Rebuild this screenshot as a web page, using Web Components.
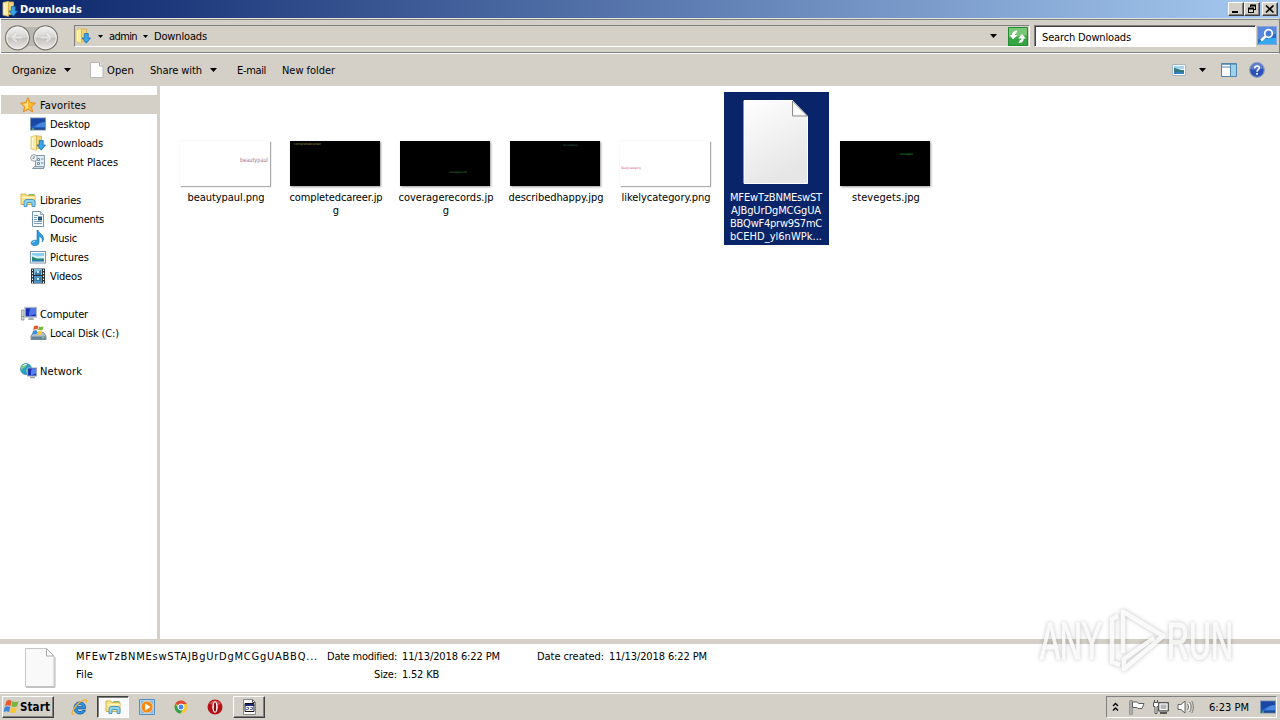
<!DOCTYPE html>
<html lang="en">
<head>
<meta charset="utf-8">
<title>Downloads</title>
<style>
    html, body { margin: 0; height: 100%; overflow: hidden; background: #fff; }
    body {
        --face: #d4cfc7;
        --navy: #0a246a;
        font: 11px/13px "DejaVu Sans Condensed", "DejaVu Sans", sans-serif;
        color: #000;
    }
</style>
</head>
<body>
<explorer-desktop></explorer-desktop>

<script>
// shared base: every element has styles() and template()
class BaseElement extends HTMLElement {
    constructor() {
        super();
        this.attachShadow({ mode: 'open' });
    }

    styles() { return ''; }
    template() { return '<slot></slot>'; }

    connectedCallback() {
        const template = document.createElement('template');
        template.innerHTML = `<style>:host { box-sizing: border-box; } * { box-sizing: border-box; } ${this.styles()}</style>${this.template()}`;
        this.shadowRoot.replaceChildren(template.content.cloneNode(true));
    }
}

// ---------- icons ----------
const ICONS = {
    downloads: [16, 16, `
        <path d="M1 1.500 6.500.5v14.800L1 14z" fill="#f9eca0" stroke="#dcc266" stroke-width=".8"/>
        <path d="M6.500 1h5v12.500h-5z" fill="#f0d67a" stroke="#d3b04e" stroke-width=".8"/>
        <path d="M2.500 3v10" stroke="#fff9d2"/>
        <path d="M9.300 5.500h3.900v4.500h2.300l-4.200 5.200-4.300-5.200h2.300z" fill="#3aa6e8" stroke="#156bb0" stroke-width=".8"/>`],
    star: [16, 16, `
        <path d="M8 .8 10.200 5.600l5.200.600-3.900 3.500 1.100 5.200L8 12.300l-4.600 2.600 1.100-5.200L.6 6.200l5.200-.6z" fill="#ffbc34" stroke="#e58417" stroke-width=".9"/>
        <path d="M8 3v8L5 12.600l.700-3.300L3 7l3.700-.4z" fill="#ffe38a"/>`],
    desktop: [16, 16, `
        <rect x=".5" y="2" width="15" height="12" fill="#2460c0" stroke="#8096b4"/>
        <path d="M1 2.500h14v4C10 6 5 9 1 11z" fill="#1a47a3"/>
        <path d="M6 10c3-3 6-4 9-4v5H5z" fill="#4787dc"/>
        <path d="M1 13h14" stroke="#1b376c"/><path d="M2 13h2" stroke="#66d97b"/>`],
    recent: [16, 16, `
        <path d="M5.500 1.500h9v11l-1 2h-9l1-2z" fill="#e5edf3" stroke="#8597a7"/>
        <path d="M2.500 14.500h11v-2h-9z" fill="#cbd8e2" stroke="#7990a2" stroke-width=".8"/>
        <path d="M7.500 4.500h2v2h-2zM11 5h2.500M11 9h2.500M7.500 8.500h2v2h-2z" fill="none" stroke="#5a87ab" stroke-width=".9"/>
        <circle cx="4" cy="4" r="3.300" fill="#f4f7fa" stroke="#91a0ad"/>
        <path d="M4 2v2.300H2.500" fill="none" stroke="#536575" stroke-width=".8"/>`],
    libraries: [17, 16, `
        <path d="M1 12.500V2h5l1 1.500h8V12.500z" fill="#f6e48f" stroke="#d3ae3e" stroke-width=".9"/>
        <path d="M2 5.500h13" stroke="#fff6c4"/><path d="M8.500 2.600h6" stroke="#6fb96c"/>
        <path d="M4 14.500V10.300C4 8.500 5 7.500 7 7.500h5c2 0 3 1 3 2.800v4.200h-3v-3c0-.8-.3-1-1-1H8c-.7 0-1 .2-1 1v3z" fill="#8ed4f0" stroke="#3a91c6" stroke-width=".9"/>`],
    documents: [16, 16, `
        <path d="M2.500.5h8l3 3v12h-11z" fill="#f8fbfe" stroke="#7393b4"/>
        <path d="M10.500.5v3h3" fill="#dce9f4" stroke="#7393b4" stroke-width=".8"/>
        <path d="M4 4.500h4M4 6.500h3M4 8.500h3M4 10.500h8M4 12.500h8" stroke="#7fa2c3"/>
        <path d="M8 5.500h4v4H8z" fill="#285689"/>`],
    music: [16, 16, `
        <path d="M8 0c.5 3.500 5.500 4 5.500 8.500 0 1.500-.6 2.600-1.300 3.500.600-3-.7-5-3.200-6v6.500c0 1.900-1.800 3.100-4 3.100-2.300 0-3.900-1-3.900-2.600 0-1.700 1.800-2.800 3.900-2.800.7 0 1.300 0 2 .3V0z" fill="#2f9fe0" stroke="#1470b6" stroke-width=".6"/>
        <path d="M2.500 13c0-1 1.200-1.500 2.500-1.500" fill="none" stroke="#a5e0fb"/>`],
    pictures: [16, 16, `
        <rect x=".5" y="2.500" width="15" height="11.500" fill="#fff" stroke="#8192a4"/>
        <path d="M2 4h12v8.500H2z" fill="#8dcff2"/><path d="M2 6.500c3-1 4 1 6 1s4-1 6 0v2H2z" fill="#dff3f8"/>
        <path d="M2 7.500l5 2h7V12H2z" fill="#2b8b72"/><path d="M2 11h12v1.500H2z" fill="#2578b2"/>`],
    videos: [16, 16, `
        <path d="M1 .5h14v15H1z" fill="#2c3136"/>
        <path d="M4 1h8v6H4z" fill="#7ebce4"/><path d="M4 8h8v7H4z" fill="#4e91c9"/>
        <path d="M5 5c2-3 4-1 6-3v5H5zM5 13c2-4 4-1 6-4v4z" fill="#397a9e"/><path d="M7 3h2v2H7zM7 10h2v2H7z" fill="#d6e9ef"/>
        <path d="M2.500 1.500v14M13.500 1.500v14" stroke="#fff" stroke-dasharray="1.500 1.500"/>`],
    computer: [17, 16, `
        <path d="M1.500 4h2.500v10H1.500z" fill="#d2d7db" stroke="#858e96" stroke-width=".8"/><path d="M1.500 10.500h2" stroke="#59b74e"/>
        <rect x="5" y="1.500" width="11.500" height="9.500" fill="#1830b5" stroke="#b4bac5" stroke-width="1.400"/>
        <path d="M11 2h5v6L9 10c0-3 0-5 2-8z" fill="#4f76e6"/>
        <path d="M9 11.500h4l1 2.500H8z" fill="#a5adb4"/>`],
    disk: [17, 16, `
        <path d="M1 11 3.500 7.500h10L16 11v3.500H1z" fill="#b3c0ca" stroke="#5e7485" stroke-width=".8"/>
        <path d="M1.500 11.500h14v2.500h-14z" fill="#658596"/><path d="M12 12.700h2" stroke="#7cf078"/>
        <path d="M4 1.300C6 0 7 .6 8.300 1.200L7.500 4.800c-1.500-.6-2.700-.7-4.300.2z" fill="#e8582a"/>
        <path d="M9 1.400c1.500.7 3 .6 4.500-.1l-.9 3.800c-1.500.6-2.800.5-4.400 0z" fill="#77b83c"/>
        <path d="M3 5.800c1.500-.8 2.700-.7 4.300 0L6.500 9.300C5 8.800 3.700 9 2.200 9.700z" fill="#3a8edb"/>
        <path d="M8 6c1.500.5 2.900.5 4.400-.1l-.9 3.700c-1.500.6-2.800.5-4.300 0z" fill="#f8c838"/>`],
    network: [17, 16, `
        <circle cx="6" cy="6" r="5.500" fill="#2b9ec7" stroke="#237c97" stroke-width=".7"/>
        <path d="M2 2.500C4 1 6 1.500 7 2L5 4.500 3 5 2 7.500.9 5zM6 6.500l3-1 1 3-3 2z" fill="#84d483"/>
        <path d="M3 3c1-1.500 3-2 4-1.500" stroke="#e1fbff" fill="none"/>
        <rect x="7.500" y="5" width="9" height="8" fill="#192fb4" stroke="#99a7b8"/>
        <path d="M12 5.500h4v5l-5 2c-.3-3 0-5 1-7z" fill="#537ff0"/><path d="M10 14.500h5" stroke="#97a1aa" stroke-width="1.500"/>`],
    page: [14, 16, `
        <path d="M.5.5h9l3.500 3.500v11.500H.5z" fill="#fdfdfd" stroke="#b8b8b8"/><path d="M9.500.5V4H13" fill="#eee" stroke="#aaa"/>`],
    refresh: [20, 19, `
        <path d="M0 0h20v19H0z" fill="#37a443"/><path d="M0 0h20v9C14 7 6 12 0 10z" fill="#78c776"/><path d="M.5.5h19v18H.5z" fill="none" stroke="#268c32"/>
        <path d="M5 12.500 2 8h2c0-3 2-4.500 5.500-4.500L8 6.500C7.200 6.700 7 7 7 8h2.500z" fill="#fff"/>
        <path d="m14 7 4 4.500h-2.200c0 3-1.800 4.500-5.300 4.500l1.500-3c1 0 1.300-.5 1.300-1.500H10z" fill="#fff"/>`],
    search: [20, 19, `
        <path d="M0 0h20v19H0z" fill="#256bc7"/><path d="M0 0h20v8C12 8 8 13 0 13z" fill="#5887dc"/><path d="M1 18c5-6 12-6 18-6v6z" fill="#36a8ee"/>
        <path d="M.5.5h19v18H.5z" fill="none" stroke="#88a7d6"/>
        <circle cx="11.500" cy="7.500" r="3.800" fill="#477acf" stroke="#fff" stroke-width="1.800"/><path d="m8.500 10.500-4.500 4" stroke="#fff" stroke-width="2.400"/>`],
    view: [14, 12, `
        <path d="M.5.5h13v11H.5z" fill="#fff" stroke="#a4b6c8"/><path d="M2 2h10v3H2z" fill="#a6d5ef"/>
        <path d="M2 4c3 0 4 2 10 2v2H2z" fill="#317b87"/><path d="M2 8h10v2H2z" fill="#3880bc"/>`],
    pane: [16, 14, `
        <path d="M.5.5h15v13H.5z" fill="#fff" stroke="#5283ad"/><path d="M1 1.500h14" stroke="#6e9fc4"/>
        <path d="M10 2h5v11h-5z" fill="#9fd3ed"/><path d="M9.500 1v12M1 4h8" stroke="#5283ad"/>`],
    help: [16, 16, `
        <circle cx="8" cy="8" r="7.300" fill="#2b50b9" stroke="#8698bf" stroke-width="1.200"/>
        <path d="M2 7a6 6 0 0 1 12 0c-4-1-8 2-12 0z" fill="#5f80cf"/>
        <path d="M5.700 6.200C5.800 4.800 6.600 4 8 4s2.400.8 2.400 2C10.400 7.600 8 7.800 8 9.800" fill="none" stroke="#fff" stroke-width="1.500"/><path d="M7.200 11h1.700v1.700H7.200z" fill="#fff"/>`],
    flag: [16, 16, `
        <path d="M2 1.500v14" stroke="#5d5d5d" stroke-width="3"/><path d="M2 2v13" stroke="#fff"/>
        <path d="M3.500 3h5l1 1.500H15l-2 5H8.800L8 8.500H3.500z" fill="#fff" stroke="#5d5d5d"/>`],
    wired: [16, 16, `
        <path d="M5.500 3.500h10v8.500h-10z" fill="#9b9b9b" stroke="#555"/>
        <path d="M7 5h7v5.500H7z" fill="#b5b5b5" stroke="#fff"/><path d="M7 14h7" stroke="#555" stroke-width="2"/>
        <path d="M.5 3.500h5v4h-1.500v7H2v-7H.5z" fill="#fff" stroke="#555"/><path d="M1.500 1v3M4.500 1v3" stroke="#555"/>`],
    sound: [17, 16, `
        <path d="M1 5.500h3L8 2v12l-4-3.500H1z" fill="#fff" stroke="#666"/>
        <path d="M10.500 5c1.300 1.800 1.300 4.200 0 6M12.500 3c2.200 3 2.200 7 0 10M14.800 2c2 3.500 2 8.500 0 12" stroke="#777" fill="none"/>
        <path d="M11.400 4c1.700 2.500 1.700 5.500 0 8" stroke="#fff" fill="none"/>`],
    winflag: [17, 16, `
        <path d="M3.500 2C5.500.6 7 .9 8.700 2L7.500 7C5.700 6 4 6 2 7z" fill="#e8592b"/>
        <path d="M9.500 2.300c2 1 4 1 6-.1l-1.400 5c-2 1-3.800 1-5.800 0z" fill="#77b53d"/>
        <path d="M1.800 8c2-1.100 3.800-1 5.500 0L6 13c-1.800-1-3.500-1-5.500 0z" fill="#3c85d8"/>
        <path d="M8.100 8.300c2 1 3.900.9 5.900-.1l-1.400 5c-2 1-3.900 1-5.800.1z" fill="#f8c633"/>`],
    ie: [17, 16, `
        <path d="M14.500 9.800H6c.1 2 1.300 2.900 3 2.900 1.200 0 2-.5 2.500-1.300h2.900c-.8 2.300-2.700 3.600-5.400 3.600-3.700 0-6-2.200-6-5.900 0-3.600 2.400-6.100 6-6.100 3.700 0 5.700 2.600 5.500 6.800zM6.100 7.700h5.400C11.300 6.100 10.400 5.300 8.900 5.300S6.400 6.100 6.100 7.700z" fill="#2f95e0" stroke="#1666ae" stroke-width="1"/>
        <path d="M3.500 14.500c-2.500 1.500-3 .1-1.900-2.300C4 7 9 1.800 13.500.8c2.100-.5 2.500 1 1.400 3" fill="none" stroke="#eeb32e" stroke-width="1.300"/>`],
    wmp: [16, 16, `
        <path d="M.5.5h15v15H.5z" fill="#a8d2f1" stroke="#568bbd"/><path d="M2 2h12v12H2z" fill="#83b9e4"/>
        <circle cx="8" cy="8" r="6" fill="#f58a16" stroke="#fff0dd" stroke-width=".6"/><path d="m6.200 4.500 5.300 3.500-5.300 3.500z" fill="#fff"/>`],
    chrome: [16, 16, `
        <circle cx="8" cy="8" r="6.500" fill="#f3c735"/><path d="M8 8 2.400 4.700A6.500 6.500 0 0 1 13.700 5H8z" fill="#de4836"/>
        <path d="M2.400 4.700A6.500 6.500 0 0 0 7.500 14.500L10.400 9.500 8 8 5 9z" fill="#30a150"/>
        <circle cx="8" cy="8" r="3" fill="#4b87e8" stroke="#fff"/>`],
    opera: [16, 16, `
        <circle cx="8" cy="8" r="7.500" fill="#b51218"/><path d="M2 5a7 7 0 0 1 12 0c-4 2-8 0-12 0z" fill="#d34a48"/>
        <ellipse cx="8" cy="8" rx="2.700" ry="5.700" fill="#fff"/><ellipse cx="8" cy="8" rx="1.200" ry="4.700" fill="#8d0d12"/>`],
    app: [13, 16, `
        <path d="M.5.500h9l3 3v12H.5z" fill="#fff" stroke="#888"/><path d="M9.500.5v3h3" fill="none" stroke="#555"/>
        <path d="M2 4.500h9v8H2z" fill="#fff" stroke="#111"/><path d="M2 5h9v2H2z" fill="#1b2c72"/>
        <path d="M3.500 8.500h2v2M5 10.500h-2M7.500 8.500h2v2M9 10.500H7" fill="none" stroke="#26367c" stroke-width=".8"/>`],
    chevrons: [7, 10, `<path d="m1 4 2.500-2.500L6 4M1 8.500 3.500 6 6 8.500" fill="none" stroke="#000" stroke-width="1.400"/>`],
    down: [7, 4, `<path d="M0 0h7L3.500 4z"/>`],
    smalldown: [5, 3, `<path d="M0 0h5L2.500 3z"/>`],
    minimize: [12, 10, `<path d="M2 7h6v2H2z"/>`],
    restore: [12, 10, `<path d="M4 .5h6V6H8V5h1V2.500H5V3H4zM2 3.500h6V9H2zM3 5.500V8h4V5.500z" fill-rule="evenodd"/>`],
    close: [12, 10, `<path d="m2 1.500 7.500 7M9.500 1.500 2 8.500" stroke="#000" stroke-width="1.700"/>`]
};

class UiIcon extends BaseElement {
    styles() {
        return `
        :host { display: inline-flex; flex: none; }
        svg { display: block; }
        `;
    }

    template() {
        const [w, h, body] = ICONS[this.getAttribute('name')];
        return `<svg width="${w}" height="${h}" viewBox="0 0 ${w} ${h}">${body}</svg>`;
    }
}

// one line of text, tracked so that it takes w pixels
class UiLabel extends BaseElement {
    styles() {
        return ':host { display: inline-block; flex: none; white-space: nowrap; }';
    }

    connectedCallback() {
        super.connectedCallback();
        const width = Number(this.getAttribute('w'));
        if (!width) return;
        this.style.letterSpacing = '0';
        const natural = this.getBoundingClientRect().width;
        this.style.letterSpacing = `${(width - natural) / this.textContent.length}px`;
    }
}

// ---------- title bar ----------
class TitleBar extends BaseElement {
    styles() {
        return `
        :host {
            display: flex; align-items: center; height: 18px; padding: 0 2px 0 2px;
            background: linear-gradient(90deg, #0a246a, #a6caf0);
            color: #fff; font-weight: bold;
        }
        ::slotted(ui-label) { margin-left: 2px; }
        .buttons { display: flex; margin-left: auto; }
        .buttons span {
            display: flex; width: 16px; height: 14px; padding: 1px;
            background: var(--face);
            border: 1px solid; border-color: #fff #404040 #404040 #fff;
            box-shadow: inset -1px -1px #808080;
        }
        .buttons span:last-child { margin-left: 2px; }
        `;
    }

    template() {
        return `
        <ui-icon name="downloads"></ui-icon>
        <slot></slot>
        <div class="buttons">
            <span><ui-icon name="minimize"></ui-icon></span>
            <span><ui-icon name="restore"></ui-icon></span>
            <span><ui-icon name="close"></ui-icon></span>
        </div>
        `;
    }
}

// ---------- address and search ----------
class NavBar extends BaseElement {
    styles() {
        return `
        :host {
            display: flex; align-items: flex-start; height: 36px; padding: 6px 2px 0 3px;
            background: var(--face);
            border: solid; border-width: 1px; border-color: #e6e3dd #808080 #fff #fff;
            box-shadow: inset 0 1px #808080, inset 0 -1px #808080;
        }
        .travel { flex: none; margin: 0 15px 0 0; }
        .address, .search {
            display: flex; align-items: center; height: 22px;
            border: 1px solid; border-color: #808080 #fff #fff #808080;
        }
        .address { flex: 1; padding-right: 1px; }
        .address ui-label { margin: 1px 5px 0 6px; }
        .address > [name=smalldown] { margin-left: 7px; }
        .address > ui-label + [name=smalldown] { margin-left: 1px; }
        .address .end { margin-left: auto; }
        .address [name=refresh] { margin-left: 11px; }
        .search {
            width: 222px; margin-left: 4px; padding: 2px 0 0 7px; background: #fff;
            box-shadow: inset 1px 1px #404040;
        }
        .go { margin: 1px 0 0 1px; }
        `;
    }

    template() {
        const arrow = '<path d="M8 12.500h10M8 12.500l5-4.500M8 12.500l5 4.500" fill="none" stroke="#aaa9a7" stroke-width="3.600"/><path d="M8 12.500h10M8 12.500l5-4.500M8 12.500l5 4.500" fill="none" stroke="#f1f0ee" stroke-width="2.400"/>';
        return `
        <svg class="travel" width="55" height="26" viewBox="0 0 55 26">
            <defs><linearGradient id="g" x2="0" y2="1"><stop stop-color="#f2f2f1"/><stop offset=".48" stop-color="#d6d5d3"/><stop offset=".52" stop-color="#c4c2bf"/><stop offset="1" stop-color="#eceae7"/></linearGradient></defs>
            <path d="M14 2h27q-10 4-10 10t10 9H14q10-3 10-9T14 2z" fill="#bbb8b2"/>
            <circle cx="13.500" cy="12.800" r="12" fill="url(#g)" stroke="#777672" stroke-width="1.200"/>
            <circle cx="13.500" cy="12.800" r="10.800" fill="none" stroke="#f2f1ee"/>
            <circle cx="41.500" cy="12.800" r="12" fill="url(#g)" stroke="#777672" stroke-width="1.200"/>
            <circle cx="41.500" cy="12.800" r="10.800" fill="none" stroke="#f2f1ee"/>
            <g opacity=".55">${arrow}<g transform="translate(55 0) scale(-1 1)">${arrow}</g></g>
        </svg>
        <div class="address">
            <ui-icon name="downloads"></ui-icon>
            <ui-icon name="smalldown"></ui-icon>
            <ui-label w="28">admin</ui-label>
            <ui-icon name="smalldown"></ui-icon>
            <ui-label w="53">Downloads</ui-label>
            <ui-icon class="end" name="down"></ui-icon>
            <ui-icon name="refresh"></ui-icon>
        </div>
        <div class="search"><ui-label w="89">Search Downloads</ui-label></div>
        <ui-icon class="go" name="search"></ui-icon>
        `;
    }
}

class CommandBar extends BaseElement {
    styles() {
        return `
        :host { display: flex; align-items: center; height: 31px; padding: 1px 15px 0 12px; background: var(--face); }
        [name=down] { margin-left: 8px; }
        [name=page] { margin: 0 3px 0 19px; }
        .share { margin-left: 16px; }
        .mail { margin-left: 20px; }
        .new { margin-left: 16px; }
        .view { margin-left: auto; }
        .view + ui-icon { margin-left: 13px; }
        .pane { margin: 0 12px 0 15px; }
        `;
    }

    template() {
        return `
        <ui-label w="44">Organize</ui-label><ui-icon name="down"></ui-icon>
        <ui-icon name="page"></ui-icon><ui-label w="27">Open</ui-label>
        <ui-label class="share" w="52">Share with</ui-label><ui-icon name="down"></ui-icon>
        <ui-label class="mail" w="29">E-mail</ui-label>
        <ui-label class="new" w="53">New folder</ui-label>
        <ui-icon class="view" name="view"></ui-icon><ui-icon name="down"></ui-icon>
        <ui-icon class="pane" name="pane"></ui-icon>
        <ui-icon name="help"></ui-icon>
        `;
    }
}

// ---------- navigation tree ----------
class TreeItem extends BaseElement {
    styles() {
        return `
        :host { display: flex; align-items: center; height: 19px; padding-left: 29px; }
        :host([root]) { padding-left: 19px; }
        :host([root]:not(:first-of-type)) { margin-top: 19px; }
        :host([selected]) { background: var(--face); }
        span { display: flex; width: 17px; margin-right: 3px; }
        ui-label { margin-top: 1px; }
        `;
    }

    template() {
        return `
        <span><ui-icon name="${this.getAttribute('icon')}"></ui-icon></span>
        <ui-label w="${this.getAttribute('w')}">${this.getAttribute('text')}</ui-label>
        `;
    }
}

class NavTree extends BaseElement {
    styles() {
        return ':host { display: block; width: 160px; padding: 9px 0 0 1px; border-right: 3px solid var(--face); }';
    }

    template() {
        return `
        <tree-item root selected icon="star" w="46" text="Favorites"></tree-item>
        <tree-item icon="desktop" w="40" text="Desktop"></tree-item>
        <tree-item icon="downloads" w="53" text="Downloads"></tree-item>
        <tree-item icon="recent" w="68" text="Recent Places"></tree-item>
        <tree-item root icon="libraries" w="41" text="Libraries"></tree-item>
        <tree-item icon="documents" w="54" text="Documents"></tree-item>
        <tree-item icon="music" w="27" text="Music"></tree-item>
        <tree-item icon="pictures" w="39" text="Pictures"></tree-item>
        <tree-item icon="videos" w="32" text="Videos"></tree-item>
        <tree-item root icon="computer" w="48" text="Computer"></tree-item>
        <tree-item icon="disk" w="69" text="Local Disk (C:)"></tree-item>
        <tree-item root icon="network" w="42" text="Network"></tree-item>
        `;
    }
}

// ---------- files ----------
class FileItem extends BaseElement {
    styles() {
        return `
        :host { display: flex; flex-direction: column; align-items: center; width: 105px; height: 153px; padding-right: 3px; }
        :host([selected]) { background: var(--navy); color: #fff; }
        .art { display: flex; align-items: flex-end; height: 94px; }
        .name { display: flex; flex-direction: column; align-items: center; margin: 5px -2px 0 0; }
        ::slotted(ui-label) { height: 13px; }
        ::slotted(svg) { display: block; margin-left: 2px; }
        `;
    }

    template() {
        return '<div class="art"><slot name="art"></slot></div><div class="name"><slot></slot></div>';
    }
}

// thumbnail of an image with one short word in it
class WordThumb extends BaseElement {
    styles() {
        return `
        :host { display: block; width: 90px; height: 45px; margin-right: 1px; background: #000; box-shadow: 1px 1px 2px #999; }
        :host([light]) { background: #fff; box-shadow: 1px 1px 1px #aaa, 0 0 1px #ddd; }
        svg { display: block; }
        `;
    }

    template() {
        const at = name => this.getAttribute(name);
        return `
        <svg width="90" height="45" viewBox="0 0 90 45">
            <text x="${at('x')}" y="${at('y')}" font-size="${at('size')}" textLength="${at('len')}" lengthAdjust="spacingAndGlyphs" fill="${at('ink')}">${at('word')}</text>
        </svg>
        `;
    }
}

class FileGrid extends BaseElement {
    styles() {
        return ':host { display: flex; flex: 1; align-items: flex-start; gap: 5px; padding: 6px 0 0 14px; }';
    }

    template() {
        return `
        <file-item>
            <word-thumb slot="art" light word="beautypaul" x="60" y="21" size="6" len="28" ink="#a97184"></word-thumb>
            <ui-label w="77">beautypaul.png</ui-label>
        </file-item>
        <file-item>
            <word-thumb slot="art" word="completedcareer" x="4" y="4" size="3.500" len="27" ink="#8a8040"></word-thumb>
            <ui-label w="93">completedcareer.jp</ui-label><ui-label>g</ui-label>
        </file-item>
        <file-item>
            <word-thumb slot="art" word="coveragerecords" x="49" y="32" size="2.800" len="18" ink="#3b9a3b"></word-thumb>
            <ui-label w="95">coveragerecords.jp</ui-label><ui-label>g</ui-label>
        </file-item>
        <file-item>
            <word-thumb slot="art" word="describedhappy" x="53" y="5" size="2.800" len="15" ink="#2c7b50"></word-thumb>
            <ui-label w="95">describedhappy.jpg</ui-label>
        </file-item>
        <file-item>
            <word-thumb slot="art" light word="likelycategory" x="1" y="28" size="3.200" len="20" ink="#d3527d"></word-thumb>
            <ui-label w="89">likelycategory.png</ui-label>
        </file-item>
        <file-item selected>
            <svg slot="art" width="66" height="86" viewBox="0 0 66 86">
                <defs><linearGradient id="paper" x2=".4" y2="1"><stop stop-color="#fff"/><stop offset="1" stop-color="#e6e6e6"/></linearGradient></defs>
                <path d="M1 .5H49.500L64.500 16.500V83.500H1z" fill="url(#paper)" stroke="#fff"/>
                <path d="M49.500 1v15h15z" fill="#f7f7f7" stroke="#8b8b8b"/><path d="M51 4v10h9z" fill="#fff"/>
            </svg>
            <ui-label w="92">MFEwTzBNMEswST</ui-label><ui-label w="90">AJBgUrDgMCGgUA</ui-label>
            <ui-label w="92">BBQwF4prw9S7mC</ui-label><ui-label w="92">bCEHD_yl6nWPk...</ui-label>
        </file-item>
        <file-item>
            <word-thumb slot="art" word="stevegets" x="60" y="14" size="3.200" len="13" ink="#2fa63c"></word-thumb>
            <ui-label w="68">stevegets.jpg</ui-label>
        </file-item>
        `;
    }
}

class DetailsPane extends BaseElement {
    styles() {
        return `
        :host {
            display: flex; align-items: flex-start; height: 54px; padding-left: 24px;
            background: #fff; border-top: 5px solid var(--face); border-bottom: 1px solid #c9c7bd;
        }
        svg { flex: none; margin: 3px 20px 0 0; }
        .column { display: flex; flex-direction: column; align-items: flex-start; gap: 5px; padding-top: 6px; }
        .name { width: 242px; }
        .caption { align-items: flex-end; width: 79px; margin-right: 5px; }
        .value { width: 98px; }
        .caption.made { width: 104px; }
        `;
    }

    template() {
        return `
        <svg width="32" height="41" viewBox="0 0 32 41">
            <path d="M1.500 1.500h21l7.500 7.500v30.500H1.500z" fill="#f9f9f9" stroke="#c6c6c6"/>
            <path d="M2 40.300h29V10" fill="none" stroke="#b5b5b5"/><path d="M22.500 1.500V9H30z" fill="#fff" stroke="#aaa"/>
        </svg>
        <div class="column name">
            <ui-label w="242">MFEwTzBNMEswSTAJBgUrDgMCGgUABBQ...</ui-label>
            <ui-label w="17">File</ui-label>
        </div>
        <div class="column caption">
            <ui-label w="70">Date modified:</ui-label>
            <ui-label w="23">Size:</ui-label>
        </div>
        <div class="column value">
            <ui-label w="98">11/13/2018 6:22 PM</ui-label>
            <ui-label w="37">1.52 KB</ui-label>
        </div>
        <div class="column caption made">
            <ui-label w="67">Date created:</ui-label>
        </div>
        <div class="column value">
            <ui-label w="98">11/13/2018 6:22 PM</ui-label>
        </div>
        `;
    }
}

// ---------- taskbar ----------
class TaskButton extends BaseElement {
    styles() {
        return `
        :host { display: flex; align-items: center; justify-content: center; width: 32px; height: 22px; }
        :host([raised]) { border: 1px solid; border-color: #fff #404040 #404040 #fff; box-shadow: inset -1px -1px #808080; }
        :host([pressed]) { background: #fbfaf8; border: 1px solid; border-color: #404040 #fff #fff #404040; box-shadow: inset 1px 1px #808080; }
        `;
    }
}

class TaskBar extends BaseElement {
    styles() {
        return `
        :host {
            display: flex; align-items: flex-start; height: 27px; padding: 2px 3px 0 2px;
            background: var(--face); border-top: 1px solid #fff;
        }
        .start { width: 52px; padding-right: 3px; font-weight: bold; font-size: 11.500px; }
        .quick { display: flex; margin-left: 9px; gap: 1px; }
        .wide { width: 34px; }
        .first { width: 33px; }
        .tray {
            display: flex; align-items: center; width: 171px; height: 22px; margin-left: auto; padding: 0 0 0 5px;
            border: 1px solid; border-color: #808080 #fff #fff #808080;
        }
        .tray [name=flag] { margin-left: 10px; }
        .tray [name=wired], .tray [name=sound] { margin-left: 8px; }
        .tray ui-label { margin-left: 15px; }
        .tray [name=desktop] { margin-left: auto; }
        `;
    }

    template() {
        return `
        <task-button class="start" raised><ui-icon name="winflag"></ui-icon><ui-label w="30">Start</ui-label></task-button>
        <div class="quick">
            <task-button class="first"><ui-icon name="ie"></ui-icon></task-button>
            <task-button pressed><ui-icon name="libraries"></ui-icon></task-button>
            <task-button class="wide"><ui-icon name="wmp"></ui-icon></task-button>
            <task-button><ui-icon name="chrome"></ui-icon></task-button>
            <task-button class="wide"><ui-icon name="opera"></ui-icon></task-button>
            <task-button raised><ui-icon name="app"></ui-icon></task-button>
        </div>
        <div class="tray">
            <ui-icon name="chevrons"></ui-icon>
            <ui-icon name="flag"></ui-icon>
            <ui-icon name="wired"></ui-icon>
            <ui-icon name="sound"></ui-icon>
            <ui-label w="40">6:23 PM</ui-label>
            <ui-icon name="desktop"></ui-icon>
        </div>
        `;
    }
}

// logo laid over the lower right corner
class WaterMark extends BaseElement {
    styles() {
        return `
        :host { position: absolute; left: 1030px; top: 590px; pointer-events: none; }
        svg { display: block; filter: drop-shadow(0 0 2px rgba(0, 0, 0, .28)); }
        text { font-family: "Liberation Sans", Arial, sans-serif; font-size: 51px; stroke: #fff; stroke-width: 1.200px; }
        `;
    }

    template() {
        return `
        <svg width="240" height="100" viewBox="0 -12 240 100">
            <g fill="#fff" opacity=".86">
                <text transform="translate(10 57) scale(.59 1)">ANY</text>
                <text transform="translate(137 57) scale(.597 1)">RUN</text>
                <g fill="none" stroke="#fff" stroke-width="4.500" stroke-linejoin="round">
                    <path d="M88 14 82 17v43l8 3"/>
                    <path d="M93 51V9.500L133 34 94 67V57L124 36"/>
                </g>
            </g>
        </svg>
        `;
    }
}

class ExplorerDesktop extends BaseElement {
    styles() {
        return `
        :host { display: flex; flex-direction: column; width: 1280px; height: 720px; position: relative; overflow: hidden; background: #fff; }
        .panes { display: flex; flex: 1; border-top: 1px solid var(--face); }
        `;
    }

    template() {
        return `
        <title-bar><ui-label w="62">Downloads</ui-label></title-bar>
        <nav-bar></nav-bar>
        <command-bar></command-bar>
        <div class="panes">
            <nav-tree></nav-tree>
            <file-grid></file-grid>
        </div>
        <details-pane></details-pane>
        <task-bar></task-bar>
        <water-mark></water-mark>
        `;
    }
}

customElements.define('explorer-desktop', ExplorerDesktop);
customElements.define('title-bar', TitleBar);
customElements.define('nav-bar', NavBar);
customElements.define('command-bar', CommandBar);
customElements.define('nav-tree', NavTree);
customElements.define('tree-item', TreeItem);
customElements.define('file-grid', FileGrid);
customElements.define('file-item', FileItem);
customElements.define('word-thumb', WordThumb);
customElements.define('details-pane', DetailsPane);
customElements.define('task-bar', TaskBar);
customElements.define('task-button', TaskButton);
customElements.define('water-mark', WaterMark);
customElements.define('ui-icon', UiIcon);
// last, so that labels are measured in their final place
customElements.define('ui-label', UiLabel);
</script>
</body>
</html>
